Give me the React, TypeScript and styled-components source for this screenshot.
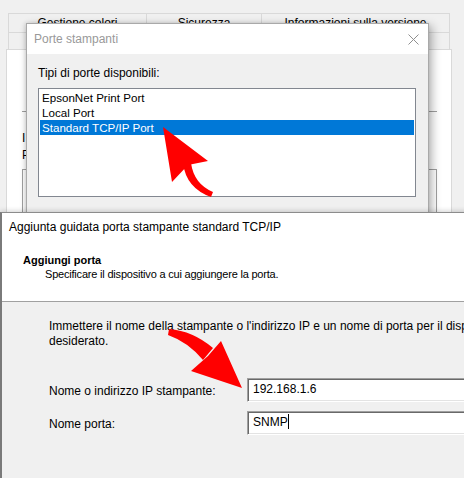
import React from "react";
import styled, { createGlobalStyle } from "styled-components";

const Global = createGlobalStyle`
  *, *::before, *::after { box-sizing: border-box; }
  html, body { margin: 0; padding: 0; }
  body {
    width: 464px; height: 478px; overflow: hidden; background: #f0f0f0;
    font-family: "Liberation Sans", Arial, sans-serif; color: #000;
  }
`;

const Desktop = styled.div`
  position: relative;
  width: 464px;
  height: 478px;
  overflow: hidden;
  background: #f0f0f0;
`;

/* ---------- background: printer properties window ---------- */
const PropsWindow = styled.div`
  position: absolute;
  left: 0;
  top: 0;
  width: 464px;
  height: 478px;
  padding-top: 13px;
  display: flex;
  flex-direction: column;
`;

const TabRow = styled.div<{ $h: number }>`
  display: flex;
  margin-left: 8px;
  width: 442px;
  height: ${(p) => p.$h}px;
  flex: none;
`;

const Tab = styled.div<{ $w: number; $last?: boolean }>`
  width: ${(p) => p.$w}px;
  border: 1px solid #d9d9d9;
  border-right: ${(p) => (p.$last ? "1px solid #d9d9d9" : "none")};
  border-bottom: none;
  font-size: 12px;
  line-height: 18px;
  text-align: center;
  white-space: nowrap;
  overflow: hidden;
`;

const Panel = styled.div`
  margin-left: 6px;
  width: 446px;
  flex: 1;
  background: #fff;
  border: 1px solid #d9d9d9;
  padding: 61px 14px 0 15px;
  display: flex;
  flex-direction: column;
`;

const PanelRule = styled.div`
  height: 1px;
  background: #a0a0a0;
`;

const PanelLabel = styled.div<{ $first?: boolean }>`
  font-size: 12px;
  line-height: 17px;
  margin-top: ${(p) => (p.$first ? 18 : 0)}px;
  white-space: nowrap;
`;

const GroupBox = styled.div`
  margin-top: 5px;
  height: 120px;
  border: 1px solid #a0a0a0;
`;

/* ---------- middle: Porte stampanti dialog ---------- */
const Dialog = styled.section`
  position: absolute;
  left: 26px;
  top: 23px;
  width: 403px;
  height: 215px;
  background: #f0f0f0;
  border: 1px solid #a9a9a9;
  box-shadow: 3px 3px 9px rgba(0, 0, 0, 0.3), -1px 0 4px rgba(0, 0, 0, 0.12);
  display: flex;
  flex-direction: column;
`;

const TitleBar = styled.header`
  height: 30px;
  flex: none;
  background: #fff;
  display: flex;
  align-items: center;
  justify-content: space-between;
  padding: 0 9px 0 7px;
  font-size: 12px;
  color: #999;
`;

const DialogBody = styled.div`
  padding: 12px 12px 0 11px;
  display: flex;
  flex-direction: column;
`;

const FieldLabel = styled.div`
  font-size: 12px;
  line-height: 15px;
`;

const ListBox = styled.ul`
  list-style: none;
  margin: 7px 0 0;
  padding: 1px;
  width: 378px;
  height: 109px;
  background: #fff;
  border: 1px solid #828790;
`;

const ListItem = styled.li<{ $sel?: boolean }>`
  height: 15px;
  line-height: 15px;
  font-size: 11.6px;
  padding-left: 2px;
  background: ${(p) => (p.$sel ? "#0078d7" : "transparent")};
  color: ${(p) => (p.$sel ? "#fff" : "#000")};
  white-space: nowrap;
`;

/* ---------- front: TCP/IP wizard ---------- */
const Wizard = styled.section`
  position: absolute;
  left: 0;
  top: 212px;
  width: 640px;
  height: 300px;
  border-top: 1px solid #8c8c8c;
  border-left: 2px solid #7a7a7a;
  background: #f0f0f0;
  box-shadow: 0 -1px 5px rgba(0, 0, 0, 0.18);
  display: flex;
  flex-direction: column;
`;

const WizardHeader = styled.div`
  height: 89px;
  flex: none;
  background: #fff;
  border-bottom: 1px solid #a0a0a0;
  padding: 7px 0 0 7px;
  display: flex;
  flex-direction: column;
`;

const WizardTitle = styled.div`
  font-size: 12px;
  line-height: 15px;
  white-space: nowrap;
`;

const StepTitle = styled.div`
  margin: 18px 0 0 14px;
  font-size: 11px;
  line-height: 14px;
  font-weight: bold;
`;

const StepText = styled.div`
  margin-left: 36px;
  font-size: 11px;
  line-height: 14px;
  letter-spacing: -0.2px;
  white-space: nowrap;
`;

const WizardBody = styled.div`
  padding: 17px 0 0 47px;
  display: flex;
  flex-direction: column;
`;

const Intro = styled.p`
  margin: 0;
  font-size: 12px;
  line-height: 14.5px;
  white-space: nowrap;
`;

const Form = styled.div`
  margin-top: 30px;
  display: grid;
  grid-template-columns: 198px 400px;
  row-gap: 9px;
`;

const RowLabel = styled.div`
  font-size: 12px;
  line-height: 15px;
  padding-top: 2px;
  align-self: center;
  white-space: nowrap;
`;

const TextField = styled.div`
  height: 24px;
  background: #fff;
  border-top: 1px solid #a0a0a0;
  border-left: 1px solid #a0a0a0;
  border-right: 1px solid #fff;
  border-bottom: 1px solid #fff;
  box-shadow: inset 1px 1px 0 #696969, inset -1px -1px 0 #e3e3e3;
  padding: 1px 4px 2px 5px;
  font-size: 12px;
  line-height: 18px;
  white-space: nowrap;
`;

const Caret = styled.span`
  display: inline-block;
  width: 1px;
  height: 15px;
  background: #000;
  vertical-align: -3px;
`;

const Overlay = styled.svg`
  position: absolute;
  left: 0;
  top: 0;
  pointer-events: none;
`;

export default function App() {
  return (
    <>
      <Global />
      <Desktop>
        <PropsWindow>
          <TabRow $h={19}>
            <Tab $w={138}>Gestione colori</Tab>
            <Tab $w={115}>Sicurezza</Tab>
            <Tab $w={189} $last>
              Informazioni sulla versione
            </Tab>
          </TabRow>
          <TabRow $h={17}>
            <Tab $w={110} />
            <Tab $w={110} />
            <Tab $w={110} />
            <Tab $w={112} $last />
          </TabRow>
          <Panel>
            <PanelRule />
            <PanelLabel $first>I</PanelLabel>
            <PanelLabel>P</PanelLabel>
            <GroupBox />
          </Panel>
        </PropsWindow>

        <Dialog>
          <TitleBar>
            <span>Porte stampanti</span>
            <svg width="11" height="11" viewBox="0 0 11 11">
              <path d="M0.5 0.5 L10.5 10.5 M10.5 0.5 L0.5 10.5" stroke="#8f8f8f" strokeWidth="1" fill="none" />
            </svg>
          </TitleBar>
          <DialogBody>
            <FieldLabel>Tipi di porte disponibili:</FieldLabel>
            <ListBox>
              <ListItem>EpsonNet Print Port</ListItem>
              <ListItem>Local Port</ListItem>
              <ListItem $sel>Standard TCP/IP Port</ListItem>
            </ListBox>
          </DialogBody>
        </Dialog>

        <Wizard>
          <WizardHeader>
            <WizardTitle>Aggiunta guidata porta stampante standard TCP/IP</WizardTitle>
            <StepTitle>Aggiungi porta</StepTitle>
            <StepText>Specificare il dispositivo a cui aggiungere la porta.</StepText>
          </WizardHeader>
          <WizardBody>
            <Intro>
              Immettere il nome della stampante o l'indirizzo IP e un nome di porta per il dispositivo
              <br />
              desiderato.
            </Intro>
            <Form>
              <RowLabel>Nome o indirizzo IP stampante:</RowLabel>
              <TextField>192.168.1.6</TextField>
              <RowLabel>Nome porta:</RowLabel>
              <TextField>
                SNMP
                <Caret />
              </TextField>
            </Form>
          </WizardBody>
        </Wizard>

        <Overlay width="464" height="478" viewBox="0 0 464 478">
          <g fill="#ff0000">
            <polygon points="163,127 208,161 188,165 172,182" />
            <path d="M183,163 Q186,188 211,197 L213,192 Q194,184 191,163 Z" />
            <polygon points="242,388 221,341 208,356 191,371" />
            <path d="M169,329 Q193,331 213,348 L203,360 Q188,342 168,335 Z" />
          </g>
        </Overlay>
      </Desktop>
    </>
  );
}
